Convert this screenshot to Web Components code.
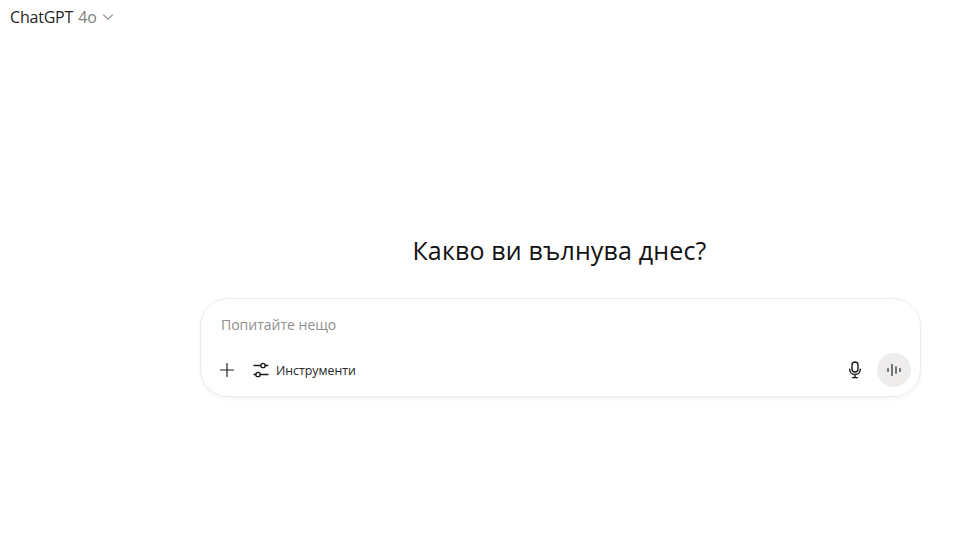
<!DOCTYPE html>
<html lang="bg">
<head>
<meta charset="utf-8">
<title>ChatGPT</title>
<style>
  html, body { margin: 0; height: 100%; background: #fff; }
  body { font-family: "Open Sans", "Noto Sans", "Liberation Sans", sans-serif; color: #0d0d0d; overflow: hidden; }
</style>
</head>
<body>
<chat-page>
  <model-picker slot="header" name="ChatGPT" version="4o"></model-picker>
  <h-greeting>Какво ви вълнува днес?</h-greeting>
  <chat-composer placeholder="Попитайте нещо" tools="Инструменти"></chat-composer>
</chat-page>

<script>
class ChatPage extends HTMLElement {
  constructor() {
    super();
    this.attachShadow({ mode: "open" });
    this.shadowRoot.innerHTML = `
      <style>
        :host { display: flex; flex-direction: column; height: 551px; }
        header { height: 33px; padding: 0 0 0 10px; display: flex; align-items: center; }
        main { flex: 1; padding: 201px 59px 0 200px; display: flex; flex-direction: column; }
      </style>
      <header><slot name="header"></slot></header>
      <main><slot></slot></main>
    `;
  }
}
customElements.define("chat-page", ChatPage);

class ModelPicker extends HTMLElement {
  constructor() {
    super();
    this.attachShadow({ mode: "open" });
    this.shadowRoot.innerHTML = `
      <style>
        :host { display: inline-flex; align-items: center; font-size: 16px; line-height: 20px; }
        .name { color: #1f1f1f; letter-spacing: -0.2px; }
        .version { color: #808080; margin-left: 5px; }
        svg { margin-left: 5px; margin-top: 1px; }
      </style>
      <span class="name"></span><span class="version"></span>
      <svg width="12" height="12" viewBox="0 0 12 12" fill="none" stroke="#8a8a8a" stroke-width="1.1" stroke-linecap="round" stroke-linejoin="round"><path d="M1.5 3.8 6 8.2l4.5-4.4"/></svg>
    `;
  }
  connectedCallback() {
    this.shadowRoot.querySelector(".name").textContent = this.getAttribute("name");
    this.shadowRoot.querySelector(".version").textContent = this.getAttribute("version");
  }
}
customElements.define("model-picker", ModelPicker);

class HGreeting extends HTMLElement {
  constructor() {
    super();
    this.attachShadow({ mode: "open" });
    this.shadowRoot.innerHTML = `
      <style>
        :host { display: block; text-align: center; font-size: 25px; letter-spacing: 0.16px; line-height: 32px; color: #111; margin-bottom: 32px; padding-right: 2px; }
      </style>
      <slot></slot>
    `;
  }
}
customElements.define("h-greeting", HGreeting);

class ChatComposer extends HTMLElement {
  constructor() {
    super();
    this.attachShadow({ mode: "open" });
    this.shadowRoot.innerHTML = `
      <style>
        :host { display: block; }
        .box {
          box-sizing: border-box; height: 99px; padding: 16px 9px 9px 20px;
          display: flex; flex-direction: column; justify-content: space-between;
          border: 1px solid #ececec; border-radius: 28px; background: #fff;
          box-shadow: 0 2px 4px rgba(0,0,0,0.05);
        }
        .placeholder { font-size: 14px; line-height: 20px; color: #8f8f8f; }
        .row { display: flex; align-items: center; height: 34px; }
        .plus { display: flex; margin-left: -2px; }
        .tools { display: flex; align-items: center; gap: 7px; margin-left: 18px; font-size: 12.3px; color: #262626; }
        .spacer { flex: 1; }
        .mic { display: flex; margin-right: 15px; }
        .voice { width: 34px; height: 34px; border-radius: 50%; background: #efecec; display: flex; align-items: center; justify-content: center; }
      </style>
      <div class="box">
        <div class="placeholder"></div>
        <div class="row">
          <span class="plus">
            <svg width="16" height="16" viewBox="0 0 16 16" fill="none" stroke="#222" stroke-width="1.2" stroke-linecap="round"><path d="M8 1.5v13M1.5 8h13"/></svg>
          </span>
          <span class="tools">
            <svg width="16" height="16" viewBox="0 0 16 16" fill="none" stroke="#1a1a1a" stroke-width="1.3" stroke-linecap="round"><path d="M1 3.5h6.8M12.2 3.5H15M1 12.5h1.8M7.2 12.5H15"/><circle cx="10" cy="3.5" r="2.2"/><circle cx="5" cy="12.5" r="2.2"/></svg>
            <span class="label"></span>
          </span>
          <span class="spacer"></span>
          <span class="mic">
            <svg width="14" height="18" viewBox="0 0 14 18" fill="none" stroke="#1a1a1a" stroke-width="1.4" stroke-linecap="round"><rect x="4" y="1" width="6" height="10" rx="3"/><path d="M1.7 8.2c0 3.1 2.2 5.2 5.3 5.2s5.3-2.1 5.3-5.2M7 13.4v3M4.4 16.6h5.2"/></svg>
          </span>
          <span class="voice">
            <svg width="16" height="14" viewBox="0 0 16 14" fill="none" stroke="#333" stroke-width="1.3" stroke-linecap="round"><path d="M2 5.6v2.8M6 1.5v11M10 3.8v6.4M14 5.6v2.8"/></svg>
          </span>
        </div>
      </div>
    `;
  }
  connectedCallback() {
    this.shadowRoot.querySelector(".placeholder").textContent = this.getAttribute("placeholder");
    this.shadowRoot.querySelector(".label").textContent = this.getAttribute("tools");
  }
}
customElements.define("chat-composer", ChatComposer);
</script>
</body>
</html>
